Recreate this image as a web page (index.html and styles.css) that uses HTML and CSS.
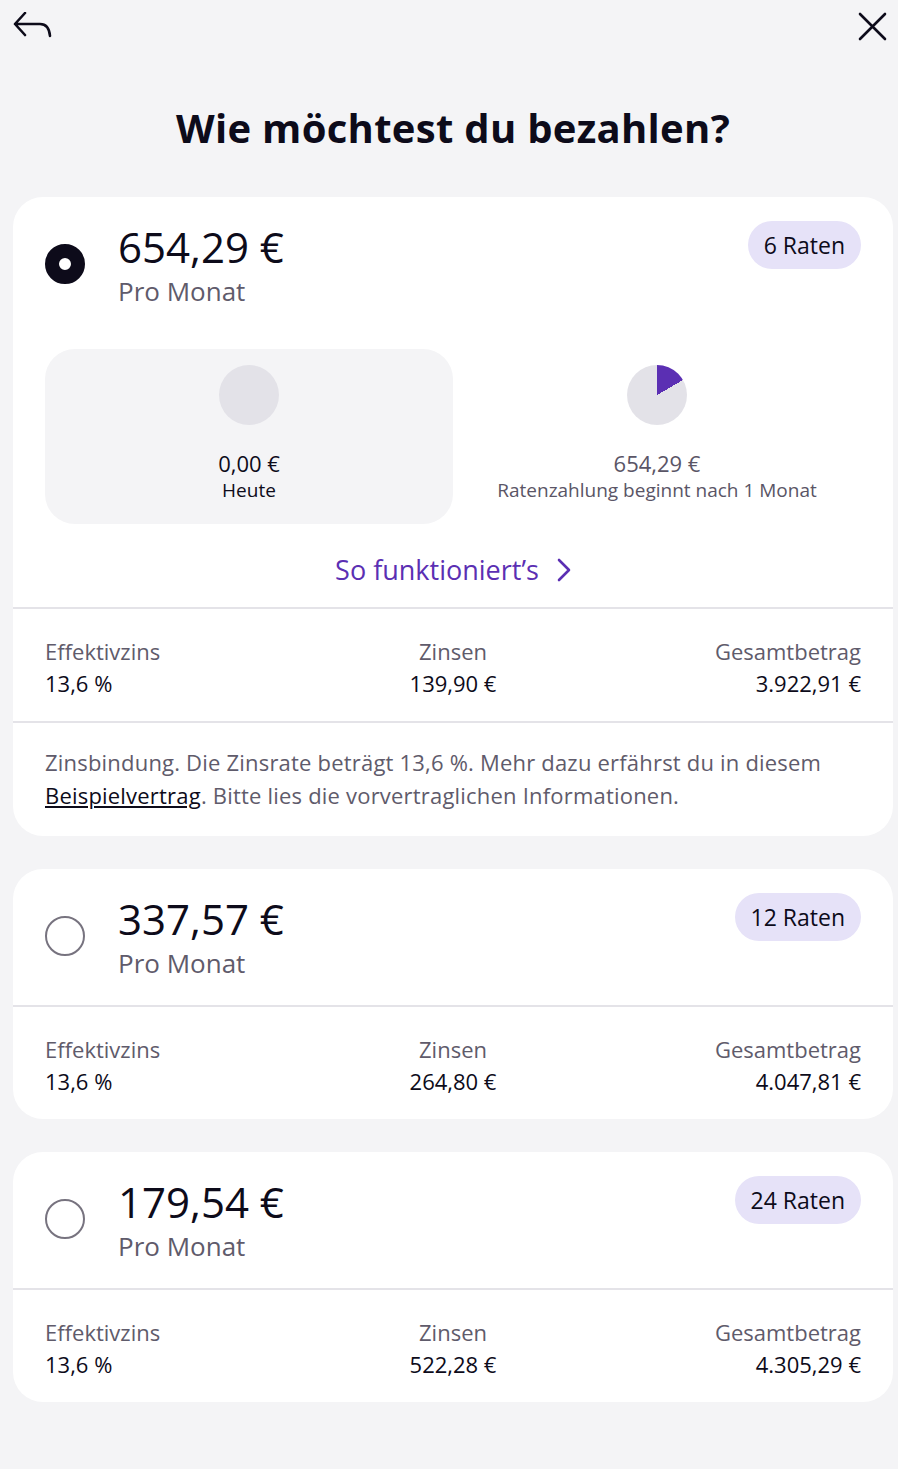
FILE: index.html
```html
<!DOCTYPE html>
<html lang="de">
<head>
    <meta charset="UTF-8">
    <title>Bezahlen</title>
    <link rel="stylesheet" href="styles.css">
</head>
<body>
<div class="topbar">
    <svg class="icon" width="40" height="30" viewBox="0 0 40 30">
        <path d="M12 1 L2 12 L12 23 M2 12 H27 Q36 12 37 24" fill="none" stroke="#0d0b1a" stroke-width="2.6" stroke-linecap="round" stroke-linejoin="round"/>
    </svg>
    <svg class="icon" width="30" height="30" viewBox="0 0 30 30">
        <path d="M2 2 L27 27 M27 2 L2 27" fill="none" stroke="#0d0b1a" stroke-width="2.6" stroke-linecap="round"/>
    </svg>
</div>

<h1 class="title">Wie möchtest du bezahlen?</h1>

<div class="cards">
    <div class="card">
        <div class="card-head">
            <span class="radio checked"></span>
            <div class="price">
                <div class="amount">654,29 €</div>
                <div class="per">Pro Monat</div>
            </div>
            <span class="badge">6 Raten</span>
        </div>
        <div class="plan">
            <div class="plan-col today">
                <div class="pie"></div>
                <div class="plan-amount">0,00 €</div>
                <div class="plan-label">Heute</div>
            </div>
            <div class="plan-col later">
                <div class="pie slice"></div>
                <div class="plan-amount">654,29 €</div>
                <div class="plan-label">Ratenzahlung beginnt nach 1 Monat</div>
            </div>
        </div>
        <a class="how" href="#">So funktioniert’s
            <svg width="14" height="24" viewBox="0 0 14 24">
                <path d="M2 2 L12 12 L2 22" fill="none" stroke="#5b2fb3" stroke-width="2.6" stroke-linecap="round" stroke-linejoin="round"/>
            </svg>
        </a>
        <div class="stats">
            <div class="stat">
                <div class="stat-label">Effektivzins</div>
                <div class="stat-value">13,6 %</div>
            </div>
            <div class="stat mid">
                <div class="stat-label">Zinsen</div>
                <div class="stat-value">139,90 €</div>
            </div>
            <div class="stat end">
                <div class="stat-label">Gesamtbetrag</div>
                <div class="stat-value">3.922,91 €</div>
            </div>
        </div>
        <p class="note">Zinsbindung. Die Zinsrate beträgt 13,6 %. Mehr dazu erfährst du in diesem <a href="#">Beispielvertrag</a>. Bitte lies die vorvertraglichen Informationen.</p>
    </div>

    <div class="card">
        <div class="card-head">
            <span class="radio"></span>
            <div class="price">
                <div class="amount">337,57 €</div>
                <div class="per">Pro Monat</div>
            </div>
            <span class="badge">12 Raten</span>
        </div>
        <div class="stats">
            <div class="stat">
                <div class="stat-label">Effektivzins</div>
                <div class="stat-value">13,6 %</div>
            </div>
            <div class="stat mid">
                <div class="stat-label">Zinsen</div>
                <div class="stat-value">264,80 €</div>
            </div>
            <div class="stat end">
                <div class="stat-label">Gesamtbetrag</div>
                <div class="stat-value">4.047,81 €</div>
            </div>
        </div>
    </div>

    <div class="card">
        <div class="card-head">
            <span class="radio"></span>
            <div class="price">
                <div class="amount">179,54 €</div>
                <div class="per">Pro Monat</div>
            </div>
            <span class="badge">24 Raten</span>
        </div>
        <div class="stats">
            <div class="stat">
                <div class="stat-label">Effektivzins</div>
                <div class="stat-value">13,6 %</div>
            </div>
            <div class="stat mid">
                <div class="stat-label">Zinsen</div>
                <div class="stat-value">522,28 €</div>
            </div>
            <div class="stat end">
                <div class="stat-label">Gesamtbetrag</div>
                <div class="stat-value">4.305,29 €</div>
            </div>
        </div>
    </div>
</div>
</body>
</html>
```

FILE: styles.css
```css
* {
    margin: 0;
    padding: 0;
    box-sizing: border-box;
}

body {
    background-color: #f4f4f6;
    font-family: "Open Sans", "Noto Sans", sans-serif;
    color: #0d0b1a;
}

.topbar {
    display: flex;
    justify-content: space-between;
    padding: 12px 10px 0 13px;
}

.icon {
    display: block;
}

.title {
    text-align: center;
    font-size: 40px;
    font-weight: 700;
    line-height: 54px;
    margin-top: 59px;
    padding-left: 8px;
    letter-spacing: 0.3px;
}

.cards {
    display: flex;
    flex-direction: column;
    gap: 33px;
    padding: 42px 5px 60px 13px;
}

.card {
    background-color: #fff;
    border-radius: 30px;
}

.card-head {
    display: flex;
    align-items: flex-start;
    padding: 24px 32px;
}

.radio {
    width: 40px;
    height: 40px;
    border-radius: 50%;
    border: 2px solid #77737f;
    margin-top: 23px;
    flex-shrink: 0;
}

.radio.checked {
    border: 14px solid #0d0b1a;
}

.price {
    flex: 1;
    margin-left: 33px;
}

.amount {
    font-size: 42px;
    line-height: 52px;
}

.per {
    font-size: 26px;
    line-height: 36px;
    color: #5f5b6b;
}

.badge {
    background-color: #e6e2f8;
    border-radius: 24px;
    height: 48px;
    line-height: 48px;
    padding: 0 16px;
    font-size: 23px;
}

.plan {
    display: grid;
    grid-template-columns: 1fr 1fr;
    padding: 16px 32px 0;
}

.plan-col {
    display: flex;
    flex-direction: column;
    align-items: center;
    padding: 16px 0 22px;
    border-radius: 30px;
}

.today {
    background-color: #f4f4f6;
}

.pie {
    width: 60px;
    height: 60px;
    border-radius: 50%;
    background-color: #e3e2e8;
    margin-bottom: 23px;
}

.pie.slice {
    background: conic-gradient(#5b2fb3 0 60deg, #e3e2e8 0);
}

.plan-amount {
    font-size: 22px;
    line-height: 30px;
}

.plan-label {
    font-size: 19px;
    line-height: 24px;
}

.later .plan-amount,
.later .plan-label {
    color: #5a5566;
}

.how {
    display: flex;
    justify-content: center;
    align-items: center;
    gap: 18px;
    margin-top: 28px;
    padding-bottom: 19px;
    font-size: 27px;
    line-height: 36px;
    color: #5b2fb3;
    text-decoration: none;
}

.stats {
    display: grid;
    grid-template-columns: 1fr 1fr 1fr;
    border-top: 2px solid #e4e3e8;
    padding: 26px 32px 22px;
}

.stat-label {
    font-size: 22px;
    line-height: 32px;
    color: #5f5b6b;
}

.stat-value {
    font-size: 22px;
    line-height: 32px;
}

.stat.mid {
    text-align: center;
}

.stat.end {
    text-align: right;
}

.note {
    border-top: 2px solid #e4e3e8;
    padding: 23px 32px 24px;
    font-size: 22px;
    line-height: 33px;
    color: #5f5b6b;
    letter-spacing: 0.2px;
}

.note a {
    color: #0d0b1a;
}
```
